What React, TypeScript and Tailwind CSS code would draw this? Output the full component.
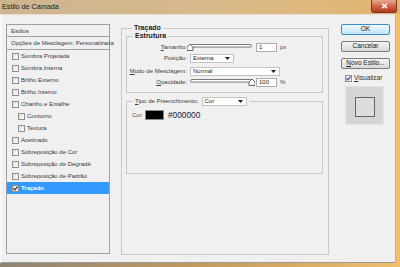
import React from 'react';

type StyleRow = { label: string; sub?: boolean; checked?: boolean; active?: boolean };

const STYLE_ROWS: StyleRow[] = [
  { label: 'Sombra Projetada' },
  { label: 'Sombra Interna' },
  { label: 'Brilho Externo' },
  { label: 'Brilho Interno' },
  { label: 'Chanfro e Entalhe' },
  { label: 'Contorno', sub: true },
  { label: 'Textura', sub: true },
  { label: 'Acetinado' },
  { label: 'Sobreposição de Cor' },
  { label: 'Sobreposição de Degradê' },
  { label: 'Sobreposição de Padrão' },
  { label: 'Traçado', checked: true, active: true },
];

function Check({ checked, blue }: { checked?: boolean; blue?: boolean }) {
  return (
    <span className="flex h-[7px] w-[7px] shrink-0 items-center justify-center border border-[#8f8f8f] bg-gradient-to-br from-[#dcdcdc] to-[#fdfdfd]">
      {checked && (
        <svg width="5" height="5" viewBox="0 0 5 5">
          <path d="M0.4 2.4 L1.9 3.9 L4.6 0.6" fill="none" stroke={blue ? '#2d4fa3' : '#2a2a2a'} strokeWidth="1.1" />
        </svg>
      )}
    </span>
  );
}

function Arrow() {
  return (
    <svg width="5" height="3" viewBox="0 0 5 3" className="shrink-0">
      <polygon points="0,0 5,0 2.5,3" fill="#1e1e1e" />
    </svg>
  );
}

function Dropdown({ value, width }: { value: string; width: string }) {
  return (
    <div className={`flex h-[9px] items-center justify-between border border-[#c3c3c3] bg-white pl-[2px] pr-[3px] ${width}`}>
      <span className="leading-none text-[#222]">{value}</span>
      <Arrow />
    </div>
  );
}

// track from x=3 to x=65, thumb centred on pos
function Slider({ pos }: { pos: number }) {
  return (
    <svg width="68" height="10" viewBox="0 0 68 10" className="-ml-[3px] shrink-0">
      <rect x="3.5" y="2.5" width="61" height="2.6" rx="1.3" fill="#fff" stroke="#6a6a6a" strokeWidth="0.9" />
      <path
        d={`M${pos} 2 L${pos + 3} 5 L${pos + 3} 8.5 L${pos - 3} 8.5 L${pos - 3} 5 Z`}
        fill="#fdfdfd"
        stroke="#444"
        strokeWidth="0.8"
      />
    </svg>
  );
}

function NumBox({ value }: { value: string }) {
  return (
    <div className="ml-[1px] flex h-[9px] w-[21px] items-center border border-[#abadb3] bg-white pl-[2px] leading-none text-[#222]">
      {value}
    </div>
  );
}

function Label({ first, rest }: { first: string; rest: string }) {
  return (
    <span className="text-right leading-none text-[#3c3c3c]">
      <span className="underline">{first}</span>
      {rest}
    </span>
  );
}

function Button({ children, primary }: { children: React.ReactNode; primary?: boolean }) {
  return (
    <div
      className={`flex h-[11px] w-[49px] items-center justify-center rounded-[2px] border text-[6.5px] leading-none text-[#222] ${
        primary
          ? 'border-[#3c8ec4] bg-gradient-to-b from-[#eef8fe] to-[#bfe4f8]'
          : 'border-[#7b7b7b] bg-gradient-to-b from-[#f4f4f4] to-[#d9d9d9]'
      }`}
    >
      {children}
    </div>
  );
}

export default function App() {
  return (
    <div className="flex h-[267px] w-[400px] flex-col overflow-hidden bg-gradient-to-r from-[#8e8474] via-[#c49a5c] to-[#efbf6c] font-['Liberation_Sans',Arial,sans-serif]">
      {/* title bar */}
      <div className="flex h-[14px] shrink-0 items-start justify-between bg-gradient-to-r from-[#ccb591] via-[#d6b98b] to-[#e3b56f]">
        <span className="pl-[2px] pt-[3px] text-[7.2px] leading-none text-[#1b1b1b]">Estilo de Camada</span>
        <div className="mr-[3px] flex h-[13px] w-[26px] items-center justify-center rounded-b-[3px] border border-t-0 border-[#7d3424] bg-gradient-to-b from-[#eaa792] via-[#d2644a] to-[#b5381e]">
          <svg width="7" height="6" viewBox="0 0 7 6">
            <path d="M1 0.8 L6 5.2 M6 0.8 L1 5.2" stroke="#fff" strokeWidth="1.5" />
          </svg>
        </div>
      </div>

      <div className="flex min-h-0 flex-1 pb-[4px] pr-[4px]">
        <div className="flex flex-1 items-start border-b border-l-2 border-r border-t border-b-[#9a9a9a] border-l-[#f8f8f8] border-r-[#b5b5b5] border-t-[#eadfcd] bg-[#f0f0f0] pl-[4px] pt-[9px] text-[6px]">
          {/* styles list */}
          <div className="flex h-[230px] w-[104px] shrink-0 flex-col border border-[#a0a0a0] text-[#3a3a3a]">
            <div className="flex h-[12px] shrink-0 items-center border-b border-[#a0a0a0] pl-[4px] leading-none">Estilos</div>
            <div className="flex h-[13px] shrink-0 items-center whitespace-nowrap border-b border-[#a0a0a0] pl-[4px] leading-none">
              Opções de Mesclagem: Personalizada
            </div>
            {STYLE_ROWS.map((r) => (
              <div
                key={r.label}
                className={`flex h-[12px] shrink-0 items-center gap-[2px] whitespace-nowrap leading-none ${
                  r.sub ? 'pl-[11px]' : 'pl-[5px]'
                } ${r.active ? 'bg-[#3399ff] font-bold text-white' : ''}`}
              >
                <Check checked={r.checked} />
                <span>{r.label}</span>
              </div>
            ))}
          </div>

          {/* Traçado group */}
          <fieldset className="ml-[11px] h-[231px] w-[208px] shrink-0 border border-[#c8c8c8] pl-[4px] pr-[5px]">
            <legend className="ml-[6px] px-[2px] text-[7px] font-bold leading-[8px] text-[#222]">Traçado</legend>

            <fieldset className="h-[61px] border border-[#c8c8c8]">
              <legend className="ml-[6px] px-[2px] text-[7px] font-bold leading-[8px] text-[#222]">Estrutura</legend>
              <div className="mt-[2px] grid grid-cols-[60px_1fr] gap-x-[3px]">
                <div className="col-span-2 grid h-[10px] grid-cols-subgrid items-center">
                  <Label first="T" rest="amanho:" />
                  <div className="flex items-center">
                    <Slider pos={3} />
                    <NumBox value="1" />
                    <span className="ml-[3px] leading-none text-[#444]">px</span>
                  </div>
                </div>
                <div className="col-span-2 mt-[1px] grid h-[10px] grid-cols-subgrid items-center">
                  <Label first="" rest="Posição:" />
                  <Dropdown value="Externa" width="w-[44px]" />
                </div>
                <div className="col-span-2 mt-[3px] grid h-[10px] grid-cols-subgrid items-center">
                  <Label first="M" rest="odo de Mesclagem:" />
                  <Dropdown value="Normal" width="w-[90px]" />
                </div>
                <div className="col-span-2 mt-[1px] grid h-[10px] grid-cols-subgrid items-center">
                  <Label first="O" rest="pacidade:" />
                  <div className="flex items-center">
                    <Slider pos={65} />
                    <NumBox value="100" />
                    <span className="ml-[3px] leading-none text-[#444]">%</span>
                  </div>
                </div>
              </div>
            </fieldset>

            <fieldset className="mt-[3px] h-[78px] border border-[#c8c8c8]">
              <legend className="ml-[6px] pl-[2px] pr-[3px]">
                <div className="flex h-[10px] items-center gap-[3px]">
                  <Label first="T" rest="ipo de Preenchimento:" />
                  <Dropdown value="Cor" width="w-[45px]" />
                </div>
              </legend>
              <div className="mt-[4px] flex h-[10px] items-center pl-[5px]">
                <span className="w-[13px] leading-none text-[#555]">Cor:</span>
                <div className="h-[10px] w-[19px] border border-[#8a8a8a] bg-black" />
                <span className="ml-[4px] text-[8.3px] leading-none text-[#17223d]">#000000</span>
              </div>
            </fieldset>
          </fieldset>

          {/* buttons */}
          <div className="ml-[12px] flex w-[49px] shrink-0 flex-col">
            <Button primary>OK</Button>
            <div className="mt-[6px]">
              <Button>Cancelar</Button>
            </div>
            <div className="mt-[6px]">
              <Button>
                <span className="underline">N</span>ovo Estilo...
              </Button>
            </div>
            <div className="ml-[4px] mt-[5px] flex h-[9px] items-center gap-[2px] text-[6.6px] leading-none text-[#333]">
              <Check checked blue />
              <span>
                <span className="underline">V</span>isualizar
              </span>
            </div>
            <div className="ml-[4px] mt-[3px] flex h-[39px] w-[39px] items-center justify-center border border-[#e4e4e4] bg-[#d5d5d5]">
              <div className="ml-[1px] mt-[2px] h-[20px] w-[20px] border border-[#666] bg-[#dddddd]" />
            </div>
          </div>
        </div>
      </div>
    </div>
  );
}
